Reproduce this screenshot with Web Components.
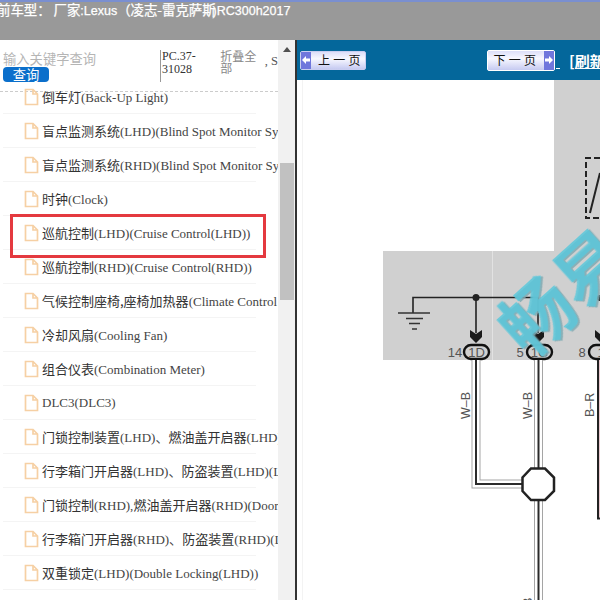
<!DOCTYPE html>
<html lang="zh"><head><meta charset="utf-8"><title>RC300h2017</title>
<style>html,body{margin:0;padding:0;width:600px;height:600px;overflow:hidden;background:#fff}</style>
</head><body>
<manual-app></manual-app>
<script>
const el=(name,html)=>customElements.define(name,class extends HTMLElement{constructor(){super();this.attachShadow({mode:'open'}).innerHTML=html}});
const CJK='"Liberation Serif","Noto Sans CJK SC",serif';
el('top-bar',`<style>:host{display:block;height:38px;border-top:2px solid #7a8fd0;background:#999;overflow:hidden;
color:#fff;font:13.400px/1 "Noto Sans CJK SC",sans-serif;white-space:nowrap}
div{padding-top:1px;margin-left:-3px;-webkit-text-stroke:.25px #fff}
::slotted(span){font:12.500px "Liberation Sans",sans-serif}
::slotted(span:last-child){margin-left:-3px}
::slotted(em){font-style:normal;margin-left:3px}</style><div><slot></slot></div>`);
el('tree-row',`<style>:host{box-sizing:border-box;height:34px;margin:0 0 0 3px;border-bottom:1px solid #f4f4f4;display:flex;align-items:center;gap:3px;padding-left:21px;
white-space:nowrap;font:13px/1 ${CJK};color:#444;width:253px}
svg{flex:none;width:15px;height:18px}
span{display:block;overflow:visible}
::slotted(b){font:13px "Noto Sans CJK SC",sans-serif;color:#333}</style>
<svg viewBox="0 0 15 18" fill="none" stroke="#f6d0a4" stroke-width="1.700"><path d="M1.500 1.500h7.500l4.500 4.500V16.500H1.500zM9 1.500V6h4.500"/></svg><span><slot></slot></span>`);
el('search-head',`<style>:host{display:flex;height:52px;box-sizing:border-box;border-bottom:1px dashed #ccc;font:13.300px/1 "Noto Sans CJK SC",sans-serif;overflow:hidden;white-space:nowrap}
.s{width:162px;padding:12px 0 0 3px;box-sizing:border-box;color:#b5b5b5}
.btn{display:block;width:46px;height:15px;margin-top:2px;border-radius:4px;background:#0b6fcb;color:#fff;text-align:center;line-height:15px}
.pc{width:61px;height:32px;margin-top:10px;box-sizing:border-box;border-left:1px solid #999;padding-left:1px;font:12px/13px "Liberation Serif",serif;color:#333;white-space:normal}
.fold{width:45px;margin-top:10px;font-size:12px;line-height:12px;color:#888;white-space:normal;padding-right:6px;box-sizing:border-box}
.s3{margin-top:14px;font:12.500px "Liberation Serif",serif;color:#555}</style>
<div class="s">输入关键字查询<span class="btn">查询</span></div><div class="pc">PC.37-31028</div><div class="fold">折叠全部</div><div class="s3">, S</div>`);
el('tree-panel',`<style>:host{display:block;position:relative;width:278px;height:560px;overflow:hidden}
.rows{margin-top:-12px}
.mark{position:absolute;left:10px;top:174px;width:250px;height:38px;border:3px solid #e4393f}</style>
<slot name="head"></slot><div class="rows"><slot></slot></div><div class="mark"></div>`);
el('v-scroll',`<style>:host{display:flex;flex-direction:column;align-items:center;width:17px;height:560px;background:#f1f1f1;box-sizing:border-box;padding-top:7px}
i{width:0;height:0;border:4px solid transparent;border-top:0;border-bottom:5px solid #505050}
b{display:block;width:14px;height:137px;margin-top:111px;background:#c1c1c1}</style><i></i><b></b>`);
el('nav-bar',`<style>:host{display:flex;align-items:center;height:40px;background:#04679b;color:#fff;overflow:hidden;white-space:nowrap;flex:none;padding-left:3px}
.b{display:flex;flex:none;align-items:center;box-sizing:border-box;height:19px;background:linear-gradient(#dcdef8,#f8f8ff 40%,#c6caf1);border:1px solid #c9cdf0;border-radius:2px;color:#111;font:12px/1 "Noto Sans CJK SC",sans-serif}
.b u{display:flex;align-items:center;justify-content:center;flex:none;width:10px;height:100%;background:#6f76dc}
.b svg{width:8px;height:8px;display:block}
.b span{flex:1;text-align:center;letter-spacing:.3px}
.prev{width:66px}.prev span{padding-left:3px}
.next{width:68px;margin-left:121px;height:21px;border-color:#fff}
.next span{padding-right:2px}
.r{flex:none;margin-left:9px;font:bold 15px "Noto Sans CJK SC",sans-serif;text-decoration:underline}
.g{flex:none;width:4px;height:1px;background:#fff;align-self:flex-end;margin:0 0 11px 1px}</style>
<div class="b prev"><u><svg viewBox="0 0 8 8"><path d="M0 4L4 0V2.500H8V5.500H4V8z" fill="#fff"/></svg></u><span>上 一 页</span></div><div class="b next"><span>下 一 页</span><u><svg viewBox="0 0 8 8"><path d="M8 4L4 0V2.500H0V5.500H4V8z" fill="#fff"/></svg></u></div><div class="g"></div><div class="r">[刷新</div>`);
el('wiring-diagram',`<style>:host{display:block;flex:1;background:#fff;border-left:1px solid #f3f3f3;margin-left:5px;overflow:hidden}
svg{display:block}text{font-family:"Liberation Sans",sans-serif}</style>
<svg width="297" height="520" viewBox="303 80 297 520">
<path d="M554 80H600V251H554zM383 251H600V360H383z" fill="#d0d0d0"/>
<path d="M492.500 251V360" stroke="#e2e2e2"/>
<path d="M600 158H586V218H600" fill="none" stroke="#222" stroke-width="2" stroke-dasharray="6 3"/>
<path d="M590 213L600 173" stroke="#222" stroke-width="2"/>
<path d="M413 313V297.500H538V333M476 297.500V333" fill="none" stroke="#222" stroke-width="1.600"/>
<circle cx="476" cy="297.500" r="3.500" fill="#222"/><circle cx="600" cy="298" r="3" fill="#222"/>
<path d="M398 313H430M406 318.500H423M409 323.500H420M412 329H417" stroke="#333" stroke-width="1.500"/>
<path d="M470 330L476 334L482 330V337L476 343L470 337zM532 330L538 334L544 330V337L538 343L532 337z" fill="#1a1a1a"/>
<path d="M595 330L600 334V342L595 337z" fill="#1a1a1a"/>
<g font-size="13" fill="#555" text-anchor="middle"><text x="455" y="356.500">14</text><text x="520" y="356.500">5</text><text x="582" y="356.500">8</text></g>
<g fill="#d0d0d0" stroke="#111" stroke-width="2.400"><rect x="464" y="345" width="25" height="14" rx="7"/><rect x="527" y="345" width="25" height="14" rx="7"/><rect x="589" y="345" width="25" height="14" rx="7"/></g>
<g font-size="13" fill="#555" text-anchor="middle"><text x="476.500" y="356.500">1D</text><text x="539.500" y="356.500">1G</text><text x="601" y="356.500">1</text></g>
<g fill="none">
<path d="M476 360V484H523" stroke="#a5a5a5" stroke-width="9"/><path d="M476 360V484H523" stroke="#fff" stroke-width="7"/>
<path d="M476 360V484H523" stroke="#2a2a2a" stroke-width="2"/>
<path d="M538.500 360V600" stroke="#a5a5a5" stroke-width="9"/><path d="M538.500 360V600" stroke="#fff" stroke-width="7"/><path d="M538.500 360V600" stroke="#2a2a2a" stroke-width="2"/>
</g>
<path d="M598 360H600V517.500H598z" fill="#e9c9cf"/>
<path d="M598 360V518.500H600" fill="none" stroke="#222" stroke-width="2"/>
<path d="M531 468.500H545L554 477.500V491L545 500H531L522.500 491V477.500z" fill="#fff" stroke="#222" stroke-width="2.500"/>
<g font-size="12.500" fill="#555"><text transform="translate(470 419) rotate(-90)">W–B</text><text transform="translate(532 419) rotate(-90)">W–B</text><text transform="translate(594 417) rotate(-90)">B–R</text><text transform="translate(532 606) rotate(-90)">B</text></g>
<g transform="translate(528 360) rotate(-42)" style="filter:drop-shadow(1px 2px 0 #7fa9b1)"><text font-size="72" font-weight="bold" fill="#5cc8da" fill-opacity=".85" style='font-family:"Noto Sans CJK SC",sans-serif'>畅易</text></g>
</svg>`);
el('manual-app',`<style>:host{display:block;width:600px;height:600px;overflow:hidden}
.main{display:flex;height:560px}.doc{flex:1;min-width:0;display:flex;flex-direction:column}
.edge{width:2px;background:#333;flex:none}</style>
<slot name="top"></slot><div class="main"><slot name="tree"></slot><v-scroll></v-scroll><div class="edge"></div><div class="doc"><nav-bar></nav-bar><wiring-diagram></wiring-diagram></div></div>`);
const rows=[['倒车灯','(Back-Up Light)'],['盲点监测系统','(LHD)(Blind Spot Monitor System(LHD))'],['盲点监测系统','(RHD)(Blind Spot Monitor System(RHD))'],['时钟','(Clock)'],['巡航控制','(LHD)(Cruise Control(LHD))'],['巡航控制','(RHD)(Cruise Control(RHD))'],['气候控制座椅,座椅加热器','(Climate Control Seat)'],['冷却风扇','(Cooling Fan)'],['组合仪表','(Combination Meter)'],['','DLC3(DLC3)'],['门锁控制装置','(LHD)、<b>燃油盖开启器</b>(LHD)(Door Lock)'],['行李箱门开启器','(LHD)、<b>防盗装置</b>(LHD)(Luggage)'],['门锁控制','(RHD),<b>燃油盖开启器</b>(RHD)(Door Lock)'],['行李箱门开启器','(RHD)、<b>防盗装置</b>(RHD)(Luggage)'],['双重锁定','(LHD)(Double Locking(LHD))']];
const app=document.querySelector('manual-app');
const tree=rows.map(([a,b])=>`<tree-row>${a?`<b>${a}</b>`:''}${b}</tree-row>`).join('');
app.innerHTML=`<top-bar slot="top">前车型：<em>厂家</em><span>:Lexus</span>（凌志-雷克萨斯<span>)RC300h2017</span></top-bar><tree-panel slot="tree"><search-head slot="head"></search-head>${tree}</tree-panel>`;
</script></body></html>
